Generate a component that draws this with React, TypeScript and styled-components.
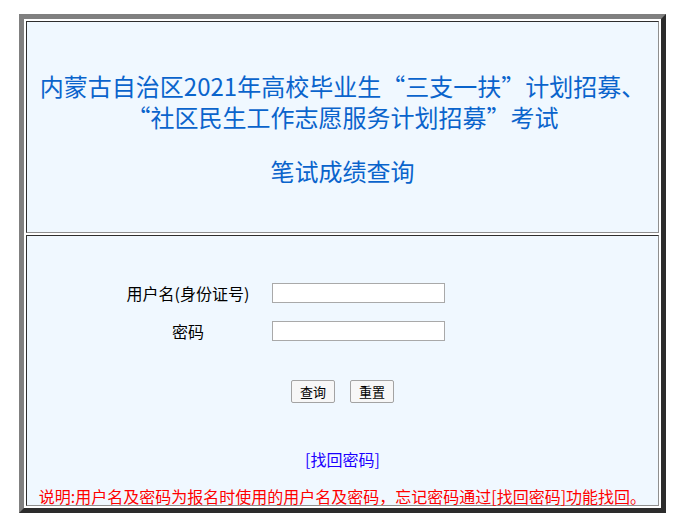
import React from 'react';
import styled, { createGlobalStyle } from 'styled-components';

const GlobalStyle = createGlobalStyle`
  body {
    margin: 0;
    background: #ffffff;
    font-family: "Noto Sans CJK SC", "Noto Sans", sans-serif;
  }
`;

const Page = styled.div`
  padding: 14px 0 0 19px;
`;

// outer table with border="5" look
const Frame = styled.div`
  box-sizing: border-box;
  width: 647px;
  display: flex;
  flex-direction: column;
  gap: 2px;
  padding: 2px;
  background: #ffffff;
  border: 5px solid;
  border-color: #808080 #2c2c2c #2c2c2c #808080;
`;

const Cell = styled.div<{ $height: number }>`
  box-sizing: border-box;
  height: ${({ $height }) => $height}px;
  background: #f0f8ff;
  border: 1px solid;
  border-color: #2e2e2e #8f8f8f #8f8f8f #2e2e2e;
  display: flex;
  flex-direction: column;
`;

const Title = styled.h1`
  margin: 0;
  padding-top: 48px;
  font-size: 24px;
  font-weight: normal;
  line-height: 31px;
  color: #0a64cc;
  text-align: center;
`;

const SubTitle = styled(Title)`
  padding-top: 0;
  margin-top: 23px;
`;

const FormGrid = styled.div`
  display: grid;
  grid-template-columns: 160px 173px;
  column-gap: 4px;
  row-gap: 18px;
  margin: 47px 0 0 81px;
`;

const Label = styled.label`
  font-size: 16px;
  line-height: 20px;
  color: #000000;
  text-align: center;
`;

const TextInput = styled.input`
  box-sizing: border-box;
  width: 173px;
  height: 20px;
  margin: 0;
  padding: 1px 3px;
  border: 1px solid #a9a9a9;
  background: #ffffff;
  font-size: 13px;
`;

const ButtonRow = styled.div`
  display: flex;
  justify-content: center;
  gap: 15px;
  margin-top: 39px;
`;

const Button = styled.button`
  box-sizing: border-box;
  height: 23px;
  padding: 0 8px;
  border: 1px solid #a3a3a3;
  border-radius: 2px;
  background: #f7f7f7;
  font-family: inherit;
  font-size: 13px;
  color: #000000;
`;

const Link = styled.a`
  display: block;
  margin-top: 46px;
  font-size: 16px;
  line-height: 20px;
  color: #1a00ff;
  text-align: center;
  text-decoration: none;
`;

const Note = styled.p`
  margin: 17px 0 0;
  font-size: 16px;
  line-height: 20px;
  color: #ff0000;
  text-align: center;
`;

const App = () => (
  <>
    <GlobalStyle />
    <Page>
      <Frame>
        <Cell $height={212}>
          <Title>
            内蒙古自治区2021年高校毕业生“三支一扶”计划招募、
            <br />
            “社区民生工作志愿服务计划招募”考试
          </Title>
          <SubTitle as="h2">笔试成绩查询</SubTitle>
        </Cell>
        <Cell $height={271}>
          <FormGrid>
            <Label htmlFor="username">用户名(身份证号)</Label>
            <TextInput id="username" type="text" autoComplete="off" />
            <Label htmlFor="password">密码</Label>
            <TextInput id="password" type="password" autoComplete="off" />
          </FormGrid>
          <ButtonRow>
            <Button type="button">查询</Button>
            <Button type="button">重置</Button>
          </ButtonRow>
          <Link href="#">[找回密码]</Link>
          <Note>说明:用户名及密码为报名时使用的用户名及密码，忘记密码通过[找回密码]功能找回。</Note>
        </Cell>
      </Frame>
    </Page>
  </>
);

export default App;
